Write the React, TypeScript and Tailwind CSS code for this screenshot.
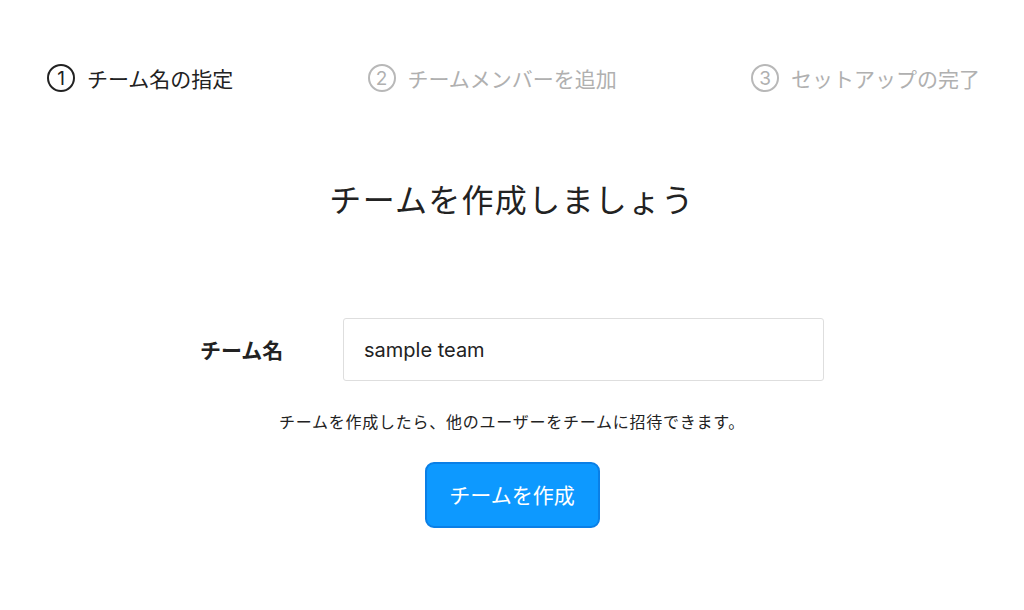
const font = { fontFamily: '"Noto Sans CJK JP", "Noto Sans", sans-serif' };
const latin = { fontFamily: 'Inter, "Noto Sans CJK JP", sans-serif' };

const steps = [
  { n: 1, label: 'チーム名の指定', active: true },
  { n: 2, label: 'チームメンバーを追加', active: false },
  { n: 3, label: 'セットアップの完了', active: false },
];

function Step({ n, label, active }: { n: number; label: string; active: boolean }) {
  return (
    <div className={`flex items-center gap-[12px] ${active ? 'text-[#222]' : 'text-[#b0b0b0]'}`}>
      <span
        className={`flex h-[28px] w-[28px] items-center justify-center rounded-full border-2 text-[19px] leading-none ${
          active ? 'border-[#222]' : 'border-[#b8b8b8]'
        }`}
        style={latin}
      >
        {n}
      </span>
      <span className="text-[21px] leading-none">{label}</span>
    </div>
  );
}

export default function App() {
  return (
    <div className="h-[610px] w-[1024px] bg-white text-[#222]" style={font}>
      <div className="flex items-center justify-between pl-[47px] pr-[44px] pt-[64px]">
        {steps.map((s) => (
          <Step key={s.n} {...s} />
        ))}
      </div>

      <h1 className="mt-[90px] text-center text-[32px] leading-none tracking-[1.3px] text-[#222]">
        チームを作成しましょう
      </h1>

      <div className="mt-[104px] flex items-center pl-[200px]">
        <label className="w-[143px] text-[21px] font-bold">チーム名</label>
        <div className="flex h-[63px] w-[481px] items-center rounded-[3px] border border-[#dedede] px-[20px]">
          <span className="text-[20px] text-[#222]" style={latin}>
            sample team
          </span>
        </div>
      </div>

      <p className="mt-[28px] text-center text-[16px] tracking-[0.75px] text-[#222]">
        チームを作成したら、他のユーザーをチームに招待できます。
      </p>

      <div className="mt-[29px] flex justify-center">
        <button className="h-[66px] w-[175px] rounded-[9px] border-2 border-[#0a7fe6] bg-[#0d99ff] text-[21px] text-white">
          チームを作成
        </button>
      </div>
    </div>
  );
}
